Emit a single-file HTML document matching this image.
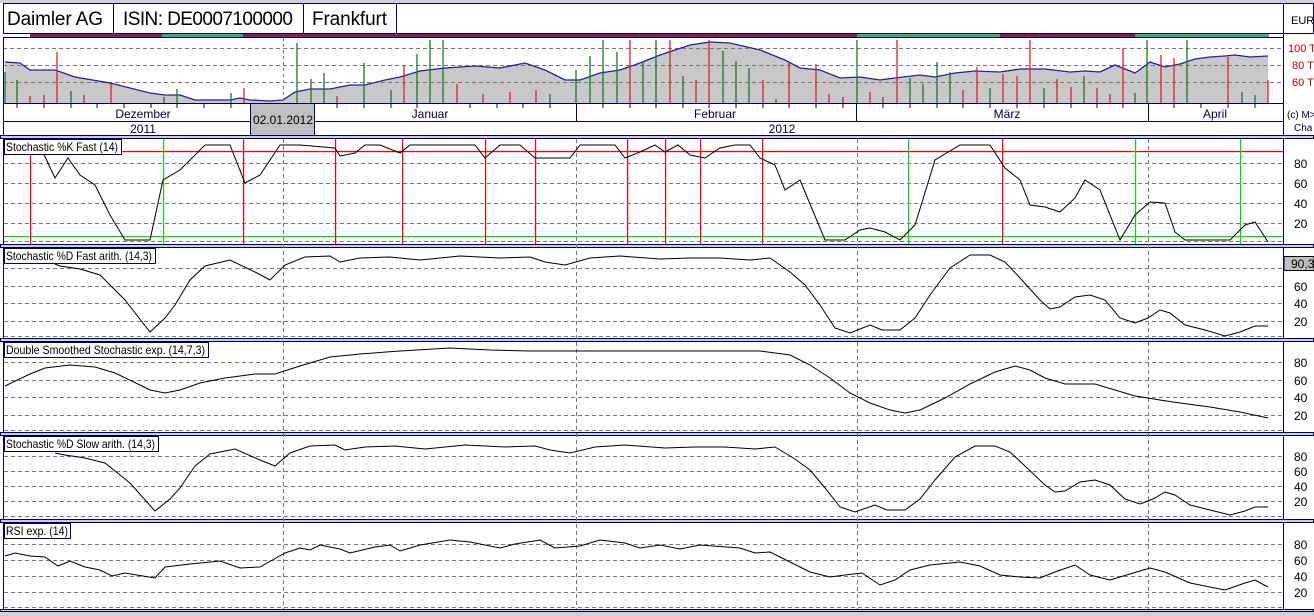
<!DOCTYPE html>
<html><head><meta charset="utf-8"><style>
html,body{margin:0;padding:0;background:#fff;}
svg{display:block;font-family:"Liberation Sans",sans-serif;}
</style></head><body>
<svg width="1314" height="616" viewBox="0 0 1314 616" xmlns="http://www.w3.org/2000/svg">
<rect width="1314" height="616" fill="#fff"/>
<rect x="0" y="612" width="1314" height="4" fill="#d4d0c8"/>
<rect x="0" y="0" width="1314" height="3" fill="#d4d0c8"/>
<g stroke="#000060" stroke-width="1" fill="none">
<rect x="3.5" y="3.5" width="1310" height="30"/>
<line x1="113.5" y1="3" x2="113.5" y2="34"/>
<line x1="303.5" y1="3" x2="303.5" y2="34"/>
<line x1="396.5" y1="3" x2="396.5" y2="34"/>
<line x1="1283.5" y1="3" x2="1283.5" y2="612"/>
</g>
<g font-size="19" fill="#000">
<text x="7" y="25" textLength="96">Daimler AG</text>
<text x="123" y="25" textLength="170">ISIN: DE0007100000</text>
<text x="312" y="25" textLength="75">Frankfurt</text>
</g>
<text x="1291" y="24" font-size="11">EUR</text>
<rect x="30" y="34" width="132" height="3" fill="#8b1c4c"/>
<rect x="162" y="34" width="81" height="3" fill="#2eb85a"/>
<rect x="243" y="34" width="614" height="3" fill="#8b1c4c"/>
<rect x="857" y="34" width="278" height="3" fill="#2eb85a"/>
<rect x="1000" y="34" width="135" height="3" fill="#8b1c4c"/>
<rect x="1135" y="34" width="134" height="3" fill="#2eb85a"/>
<line x1="3" y1="37.5" x2="1283" y2="37.5" stroke="#000060"/>
<polygon fill="#c8c8c8" points="5,103 5,62 20,63 30,70 55,70 75,77 110,83 150,93 165,95 180,95 195,100 230,100 240,98 250,100 270,101 283,100 295,92 310,89 330,89 350,85 365,85 385,80 400,77 420,71 445,68 475,66 500,68 525,63 545,70 565,80 580,80 600,73 620,70 640,63 660,55 690,45 710,42 730,43 760,50 785,60 800,68 820,70 840,78 860,77 880,80 895,78 920,75 935,77 955,73 975,71 1000,72 1020,69 1045,69 1070,72 1085,71 1100,72 1115,65 1135,73 1150,62 1165,67 1180,64 1195,59 1210,57 1225,56 1235,55 1250,57 1268,56 1268,103"/>
<g stroke="#777" stroke-dasharray="4,3" stroke-width="1">
<line x1="3" y1="48.5" x2="1283" y2="48.5"/><line x1="3" y1="65.5" x2="1283" y2="65.5"/><line x1="3" y1="82.5" x2="1283" y2="82.5"/>
</g>
<polyline fill="none" stroke="#2020b0" stroke-width="1.3" points="5,62 20,63 30,70 55,70 75,77 110,83 150,93 165,95 180,95 195,100 230,100 240,98 250,100 270,101 283,100 295,92 310,89 330,89 350,85 365,85 385,80 400,77 420,71 445,68 475,66 500,68 525,63 545,70 565,80 580,80 600,73 620,70 640,63 660,55 690,45 710,42 730,43 760,50 785,60 800,68 820,70 840,78 860,77 880,80 895,78 920,75 935,77 955,73 975,71 1000,72 1020,69 1045,69 1070,72 1085,71 1100,72 1115,65 1135,73 1150,62 1165,67 1180,64 1195,59 1210,57 1225,56 1235,55 1250,57 1268,56"/>
<g stroke-width="1.3">
<g stroke="#1a7a1a">
<line x1="5" y1="103" x2="5" y2="72"/><line x1="17" y1="103" x2="17" y2="80"/><line x1="71" y1="103" x2="71" y2="91"/><line x1="164" y1="103" x2="164" y2="97"/><line x1="177" y1="103" x2="177" y2="89"/><line x1="231" y1="103" x2="231" y2="93"/><line x1="297" y1="103" x2="297" y2="43"/><line x1="311" y1="103" x2="311" y2="79"/><line x1="324" y1="103" x2="324" y2="73"/><line x1="364" y1="103" x2="364" y2="63"/><line x1="391" y1="103" x2="391" y2="90"/><line x1="417" y1="103" x2="417" y2="54"/><line x1="430" y1="103" x2="430" y2="40"/><line x1="443" y1="103" x2="443" y2="40"/><line x1="550" y1="103" x2="550" y2="94"/><line x1="576" y1="103" x2="576" y2="70"/><line x1="590" y1="103" x2="590" y2="56"/><line x1="603" y1="103" x2="603" y2="40"/><line x1="617" y1="103" x2="617" y2="52"/><line x1="643" y1="103" x2="643" y2="61"/><line x1="656" y1="103" x2="656" y2="40"/><line x1="683" y1="103" x2="683" y2="76"/><line x1="723" y1="103" x2="723" y2="51"/><line x1="736" y1="103" x2="736" y2="61"/><line x1="749" y1="103" x2="749" y2="68"/><line x1="776" y1="103" x2="776" y2="99"/><line x1="857" y1="103" x2="857" y2="40"/><line x1="910" y1="103" x2="910" y2="78"/><line x1="923" y1="103" x2="923" y2="84"/><line x1="937" y1="103" x2="937" y2="62"/><line x1="950" y1="103" x2="950" y2="72"/><line x1="990" y1="103" x2="990" y2="88"/><line x1="1044" y1="103" x2="1044" y2="88"/><line x1="1084" y1="103" x2="1084" y2="76"/><line x1="1135" y1="103" x2="1135" y2="93"/><line x1="1147" y1="103" x2="1147" y2="40"/><line x1="1187" y1="103" x2="1187" y2="40"/><line x1="1242" y1="103" x2="1242" y2="92"/><line x1="1255" y1="103" x2="1255" y2="95"/>
</g>
<g stroke="#e02020">
<line x1="30" y1="103" x2="30" y2="96"/><line x1="44" y1="103" x2="44" y2="95"/><line x1="57" y1="103" x2="57" y2="52"/><line x1="84" y1="103" x2="84" y2="95"/><line x1="111" y1="103" x2="111" y2="84"/><line x1="244" y1="103" x2="244" y2="88"/><line x1="337" y1="103" x2="337" y2="96"/><line x1="404" y1="103" x2="404" y2="65"/><line x1="457" y1="103" x2="457" y2="84"/><line x1="483" y1="103" x2="483" y2="94"/><line x1="510" y1="103" x2="510" y2="92"/><line x1="536" y1="103" x2="536" y2="90"/><line x1="630" y1="103" x2="630" y2="40"/><line x1="670" y1="103" x2="670" y2="40"/><line x1="696" y1="103" x2="696" y2="80"/><line x1="709" y1="103" x2="709" y2="40"/><line x1="763" y1="103" x2="763" y2="80"/><line x1="789" y1="103" x2="789" y2="63"/><line x1="816" y1="103" x2="816" y2="64"/><line x1="829" y1="103" x2="829" y2="94"/><line x1="843" y1="103" x2="843" y2="97"/><line x1="870" y1="103" x2="870" y2="92"/><line x1="883" y1="103" x2="883" y2="97"/><line x1="897" y1="103" x2="897" y2="40"/><line x1="963" y1="103" x2="963" y2="90"/><line x1="977" y1="103" x2="977" y2="67"/><line x1="1003" y1="103" x2="1003" y2="74"/><line x1="1017" y1="103" x2="1017" y2="76"/><line x1="1030" y1="103" x2="1030" y2="40"/><line x1="1057" y1="103" x2="1057" y2="79"/><line x1="1071" y1="103" x2="1071" y2="87"/><line x1="1097" y1="103" x2="1097" y2="88"/><line x1="1110" y1="103" x2="1110" y2="94"/><line x1="1123" y1="103" x2="1123" y2="48"/><line x1="1161" y1="103" x2="1161" y2="55"/><line x1="1174" y1="103" x2="1174" y2="58"/><line x1="1228" y1="103" x2="1228" y2="57"/><line x1="1268" y1="103" x2="1268" y2="80"/>
</g>
</g>
<g stroke="#777" stroke-dasharray="3,3"><line x1="283.5" y1="38" x2="283.5" y2="103"/></g>
<line x1="3" y1="103.5" x2="1283" y2="103.5" stroke="#000060"/>
<g stroke="#000060">
<line x1="17" y1="103" x2="17" y2="108"/><line x1="44" y1="103" x2="44" y2="108"/><line x1="71" y1="103" x2="71" y2="108"/><line x1="97" y1="103" x2="97" y2="108"/><line x1="124" y1="103" x2="124" y2="108"/><line x1="151" y1="103" x2="151" y2="108"/><line x1="177" y1="103" x2="177" y2="108"/><line x1="204" y1="103" x2="204" y2="108"/><line x1="231" y1="103" x2="231" y2="108"/><line x1="311" y1="103" x2="311" y2="108"/><line x1="337" y1="103" x2="337" y2="108"/><line x1="364" y1="103" x2="364" y2="108"/><line x1="391" y1="103" x2="391" y2="108"/><line x1="417" y1="103" x2="417" y2="108"/><line x1="470" y1="103" x2="470" y2="108"/><line x1="497" y1="103" x2="497" y2="108"/><line x1="523" y1="103" x2="523" y2="108"/><line x1="550" y1="103" x2="550" y2="108"/><line x1="603" y1="103" x2="603" y2="108"/><line x1="630" y1="103" x2="630" y2="108"/><line x1="656" y1="103" x2="656" y2="108"/><line x1="683" y1="103" x2="683" y2="108"/><line x1="709" y1="103" x2="709" y2="108"/><line x1="736" y1="103" x2="736" y2="108"/><line x1="763" y1="103" x2="763" y2="108"/><line x1="789" y1="103" x2="789" y2="108"/><line x1="816" y1="103" x2="816" y2="108"/><line x1="843" y1="103" x2="843" y2="108"/><line x1="883" y1="103" x2="883" y2="108"/><line x1="910" y1="103" x2="910" y2="108"/><line x1="937" y1="103" x2="937" y2="108"/><line x1="963" y1="103" x2="963" y2="108"/><line x1="990" y1="103" x2="990" y2="108"/><line x1="1017" y1="103" x2="1017" y2="108"/><line x1="1044" y1="103" x2="1044" y2="108"/><line x1="1071" y1="103" x2="1071" y2="108"/><line x1="1097" y1="103" x2="1097" y2="108"/><line x1="1123" y1="103" x2="1123" y2="108"/><line x1="1174" y1="103" x2="1174" y2="108"/><line x1="1201" y1="103" x2="1201" y2="108"/><line x1="1228" y1="103" x2="1228" y2="108"/><line x1="1255" y1="103" x2="1255" y2="108"/>
<line x1="3" y1="121.5" x2="1283" y2="121.5"/>
<line x1="576.5" y1="103" x2="576.5" y2="121"/>
<line x1="856.5" y1="103" x2="856.5" y2="121"/>
<line x1="1148.5" y1="103" x2="1148.5" y2="121"/>
<line x1="3.5" y1="37" x2="3.5" y2="612"/>
</g>
<g font-size="12" fill="#000040" text-anchor="middle">
<text x="143" y="118">Dezember</text><text x="430" y="118">Januar</text><text x="715" y="118">Februar</text><text x="1007" y="118">März</text><text x="1215" y="118">April</text>
<text x="143" y="133">2011</text><text x="782" y="133">2012</text>
</g>
<rect x="250.5" y="103.5" width="64" height="32" fill="#c0c0c0" stroke="#000060"/>
<text x="283" y="124" font-size="12" text-anchor="middle" fill="#000">02.01.2012</text>
<g font-size="11" fill="#c00000"><text x="1288" y="52">100 T</text><text x="1292" y="69">80 T</text><text x="1292" y="86">60 T</text></g>
<text x="1287" y="118" font-size="10" fill="#000040">(c) M&gt;</text>
<text x="1294" y="131" font-size="10" fill="#000040">Cha</text>

<g fill="#c8cce8" stroke="#000060">
<rect x="0.5" y="135.5" width="1313" height="3"/>
<rect x="0.5" y="244.5" width="1313" height="3"/>
<rect x="0.5" y="338.5" width="1313" height="3"/>
<rect x="0.5" y="432.5" width="1313" height="3"/>
<rect x="0.5" y="519.5" width="1313" height="3"/>
<rect x="0.5" y="609.5" width="1313" height="2"/>
</g>

<g stroke="#777" stroke-dasharray="4,3">
<line x1="4" y1="163.5" x2="1283" y2="163.5"/><line x1="4" y1="183.5" x2="1283" y2="183.5"/><line x1="4" y1="203.5" x2="1283" y2="203.5"/><line x1="4" y1="223.5" x2="1283" y2="223.5"/><line x1="4" y1="241.5" x2="1283" y2="241.5"/>
<line x1="4" y1="268.5" x2="1283" y2="268.5"/><line x1="4" y1="286.5" x2="1283" y2="286.5"/><line x1="4" y1="303.5" x2="1283" y2="303.5"/><line x1="4" y1="321.5" x2="1283" y2="321.5"/><line x1="4" y1="336.5" x2="1283" y2="336.5"/>
<line x1="4" y1="362.5" x2="1283" y2="362.5"/><line x1="4" y1="380.5" x2="1283" y2="380.5"/><line x1="4" y1="397.5" x2="1283" y2="397.5"/><line x1="4" y1="415.5" x2="1283" y2="415.5"/><line x1="4" y1="430.5" x2="1283" y2="430.5"/>
<line x1="4" y1="456.5" x2="1283" y2="456.5"/><line x1="4" y1="471.5" x2="1283" y2="471.5"/><line x1="4" y1="486.5" x2="1283" y2="486.5"/><line x1="4" y1="501.5" x2="1283" y2="501.5"/><line x1="4" y1="516.5" x2="1283" y2="516.5"/>
<line x1="4" y1="544.5" x2="1283" y2="544.5"/><line x1="4" y1="560.5" x2="1283" y2="560.5"/><line x1="4" y1="576.5" x2="1283" y2="576.5"/><line x1="4" y1="592.5" x2="1283" y2="592.5"/><line x1="4" y1="607.5" x2="1283" y2="607.5"/>
</g>
<g stroke="#777" stroke-dasharray="4,3">
<line x1="283.5" y1="139" x2="283.5" y2="609"/><line x1="576.5" y1="139" x2="576.5" y2="609"/><line x1="857.5" y1="139" x2="857.5" y2="609"/><line x1="1148.5" y1="139" x2="1148.5" y2="609"/>
</g>

<rect x="4" y="151" width="1279" height="1.2" fill="#ff0000"/>
<rect x="4" y="236" width="1279" height="1.2" fill="#00dd00"/>
<g fill="#ff0000">
<rect x="30" y="139" width="1.2" height="105"/><rect x="243" y="139" width="1.2" height="105"/><rect x="335" y="139" width="1.2" height="105"/><rect x="402" y="139" width="1.2" height="105"/><rect x="485" y="139" width="1.2" height="105"/><rect x="535" y="139" width="1.2" height="105"/><rect x="627" y="139" width="1.2" height="105"/><rect x="665" y="139" width="1.2" height="105"/><rect x="700" y="139" width="1.2" height="105"/><rect x="762" y="139" width="1.2" height="105"/><rect x="1002" y="139" width="1.2" height="105"/>
</g>
<g fill="#00dd00">
<rect x="163" y="139" width="1.2" height="105"/><rect x="908" y="139" width="1.2" height="105"/><rect x="1135" y="139" width="1.2" height="105"/><rect x="1240" y="139" width="1.2" height="105"/>
</g>

<g fill="none" stroke="#000" stroke-width="1">
<polyline points="40,146 55,178 68,158 80,175 95,185 110,215 125,240 150,240 163,180 180,170 205,145 230,145 245,183 260,175 280,145 300,145 335,148 340,156 355,153 365,145 380,145 400,153 410,145 475,145 485,158 500,145 520,145 535,158 570,158 580,145 615,145 625,158 640,152 655,145 665,152 678,145 690,155 705,158 720,148 735,145 750,145 760,158 775,165 785,190 800,180 825,240 845,240 860,230 870,228 885,232 900,240 915,225 935,160 960,145 990,145 1005,168 1020,180 1030,205 1045,207 1060,212 1075,198 1085,180 1100,190 1120,240 1135,215 1150,202 1165,203 1175,232 1185,240 1230,240 1245,225 1255,222 1268,242"/>
<polyline points="50,262 60,266 80,269 100,275 125,300 150,332 165,318 175,305 190,280 205,266 230,260 255,272 270,280 285,265 305,257 330,256 340,262 360,258 390,257 420,260 460,256 500,258 530,257 545,262 565,265 590,258 620,256 660,259 690,258 720,258 750,260 770,258 790,272 805,285 820,305 835,328 850,333 870,325 882,330 900,330 915,318 930,295 950,268 970,255 990,255 1005,262 1020,278 1040,300 1050,309 1060,307 1075,297 1090,295 1105,300 1120,318 1135,323 1148,318 1160,310 1170,313 1185,325 1205,330 1225,336 1240,332 1255,326 1268,326"/>
<polyline points="5,386 30,374 45,368 70,365 95,367 115,373 140,385 150,390 165,393 180,390 200,383 225,378 255,374 275,374 300,366 330,357 360,354 400,351 450,348 490,350 530,351 580,351 640,351 700,351 760,351 790,355 810,365 830,378 850,393 870,403 890,410 905,413 920,410 945,398 970,384 995,372 1015,366 1030,370 1045,378 1065,384 1095,384 1115,390 1135,396 1160,400 1180,403 1210,407 1240,412 1268,418"/>
<polyline points="55,453 65,455 85,458 105,463 130,483 155,511 170,499 180,488 195,466 210,454 235,449 260,460 275,466 290,453 310,446 335,445 345,450 365,447 395,446 425,449 465,445 505,447 535,446 550,450 570,453 595,447 625,445 665,448 695,447 725,447 755,449 775,447 795,459 810,470 825,488 840,507 855,512 875,505 887,510 905,510 920,499 935,480 955,457 975,446 995,446 1010,452 1025,466 1045,485 1055,492 1065,491 1080,482 1095,480 1110,485 1125,499 1140,504 1153,499 1165,492 1175,495 1190,505 1210,510 1230,515 1245,511 1255,507 1268,507"/>
<polyline points="5,556 15,553 30,556 45,557 58,566 70,561 85,567 100,570 112,576 125,573 155,578 165,567 190,564 220,561 240,568 260,567 285,553 300,548 310,550 320,545 340,549 350,553 375,547 390,545 400,551 420,545 450,540 470,542 500,548 515,544 540,540 555,548 580,546 600,540 625,543 640,548 660,545 680,549 700,545 740,548 755,553 770,552 790,562 810,572 830,577 845,575 862,573 880,585 895,580 910,570 930,565 960,562 980,566 1000,575 1020,577 1040,578 1055,572 1075,565 1090,575 1110,580 1130,574 1150,568 1165,572 1190,583 1225,590 1245,583 1255,580 1268,587"/>
</g>

<g font-size="12" fill="#000">
<rect x="4.5" y="139.5" width="117" height="15" fill="#fff" stroke="#000060"/><text x="6" y="151" textLength="112" lengthAdjust="spacingAndGlyphs">Stochastic %K Fast (14)</text>
<rect x="4.5" y="248.5" width="151" height="15" fill="#fff" stroke="#000060"/><text x="6" y="260" textLength="146" lengthAdjust="spacingAndGlyphs">Stochastic %D Fast arith. (14,3)</text>
<rect x="4.5" y="342.5" width="204" height="15" fill="#fff" stroke="#000060"/><text x="6" y="354" textLength="199" lengthAdjust="spacingAndGlyphs">Double Smoothed Stochastic exp. (14,7,3)</text>
<rect x="4.5" y="436.5" width="154" height="15" fill="#fff" stroke="#000060"/><text x="6" y="448" textLength="149" lengthAdjust="spacingAndGlyphs">Stochastic %D Slow arith. (14,3)</text>
<rect x="4.5" y="523.5" width="66" height="15" fill="#fff" stroke="#000060"/><text x="6" y="535" textLength="62" lengthAdjust="spacingAndGlyphs">RSI exp. (14)</text>
</g>
<g font-size="12" fill="#000">
<text x="1294" y="168">80</text><text x="1294" y="188">60</text><text x="1294" y="208">40</text><text x="1294" y="228">20</text>
<text x="1294" y="291">60</text><text x="1294" y="308">40</text><text x="1294" y="326">20</text>
<text x="1294" y="367">80</text><text x="1294" y="385">60</text><text x="1294" y="402">40</text><text x="1294" y="420">20</text>
<text x="1294" y="461">80</text><text x="1294" y="476">60</text><text x="1294" y="491">40</text><text x="1294" y="506">20</text>
<text x="1294" y="549">80</text><text x="1294" y="565">60</text><text x="1294" y="581">40</text><text x="1294" y="597">20</text>
</g>
<rect x="1284" y="256.5" width="30" height="14" fill="#c0c0c0" stroke="#000"/>
<text x="1291" y="268" font-size="12">90,30</text>
</svg>
</body></html>
